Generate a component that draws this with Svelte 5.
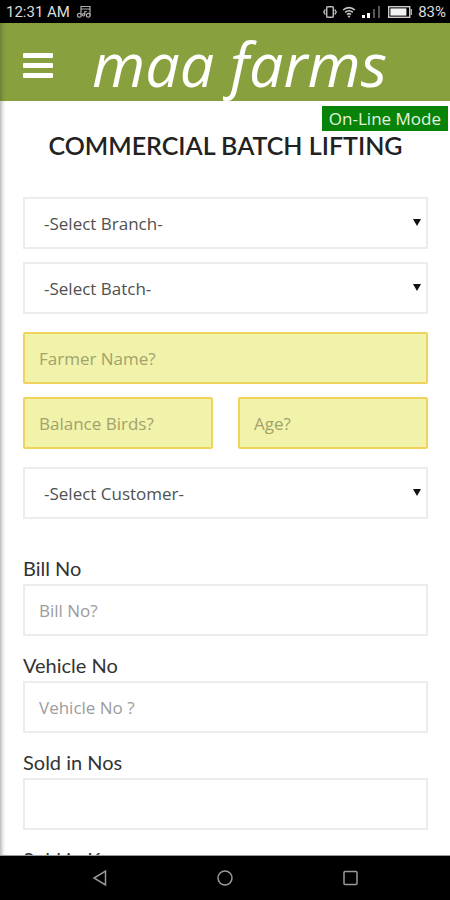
<script lang="ts">
  let branch = $state('')
  let batch = $state('')
  let customer = $state('')
</script>

<div class="screen">
  <div class="status">
    <span>12:31 AM</span>
    <svg class="note" width="16" height="15" viewBox="0 0 16 15" fill="none" stroke="#aaa" stroke-width="1.2">
      <path d="M5 11V2.5h9v9M5 5h9M8.8 10.5V7.5h2" />
      <circle cx="3.3" cy="11.3" r="1.9" />
      <circle cx="7.6" cy="10.8" r="1.2" />
      <circle cx="12.3" cy="11.3" r="1.9" />
    </svg>
    <div class="indicators">
      <svg width="14" height="14" viewBox="0 0 14 14" fill="none" stroke="#bbb" stroke-width="1.5">
        <rect x="3.7" y="1.7" width="6.6" height="10.6" rx="1" />
        <path d="M2.2 4.5 0.8 7l1.4 2.5M11.8 4.5 13.2 7l-1.4 2.5" />
      </svg>
      <svg width="14" height="14" viewBox="0 0 14 14" fill="none" stroke="#ccc" stroke-width="1.6">
        <path d="M1.2 5C4.6 1.8 9.4 1.8 12.8 5M3.2 7.3c2.2-2 5.4-2 7.6 0M5 9.5c1.2-1 2.8-1 4 0" />
        <path d="M5.4 10.8h3.2L7 13z" fill="#ccc" stroke="none" />
      </svg>
      <svg width="20" height="14" viewBox="0 0 20 14">
        <path d="M1 10h3v3H1zM6 8h3v5H6z" fill="#fff" />
        <path d="M12 4h2v9h-2zM17 1h2v12h-2z" fill="#555" />
      </svg>
      <svg class="battery" width="25" height="14" viewBox="0 0 25 14">
        <rect x="0.7" y="1.7" width="21" height="10.6" fill="none" stroke="#ccc" stroke-width="1.4" />
        <rect x="2.4" y="3.4" width="16" height="7.2" fill="#f2f2f2" />
        <path d="M22.5 4H24v6h-1.5z" fill="#aaa" />
      </svg>
      <span>83%</span>
    </div>
  </div>

  <header>
    <button class="menu" type="button" aria-label="Menu">
      <i></i><i></i><i></i>
    </button>
    <span class="brand">maa farms</span>
  </header>

  <main>
    <span class="mode">On-Line Mode</span>
    <h1>COMMERCIAL BATCH LIFTING</h1>

    <form>
      <div class="group">
        <div class="select">
          <select bind:value={branch} aria-label="Branch">
            <option value="">-Select Branch-</option>
          </select>
        </div>
        <div class="select">
          <select bind:value={batch} aria-label="Batch">
            <option value="">-Select Batch-</option>
          </select>
        </div>
      </div>

      <div class="group">
        <input class="info" type="text" placeholder="Farmer Name?" aria-label="Farmer Name" readonly />
        <div class="pair">
          <input class="info" type="text" placeholder="Balance Birds?" aria-label="Balance Birds" readonly />
          <input class="info" type="text" placeholder="Age?" aria-label="Age" readonly />
        </div>
      </div>

      <div class="select">
        <select bind:value={customer} aria-label="Customer">
          <option value="">-Select Customer-</option>
        </select>
      </div>

      <div class="fields">
        <div class="field">
          <label for="bill">Bill No</label>
          <input id="bill" type="text" placeholder="Bill No?" />
        </div>
        <div class="field">
          <label for="vehicle">Vehicle No</label>
          <input id="vehicle" type="text" placeholder="Vehicle No ?" />
        </div>
        <div class="field">
          <label for="nos">Sold in Nos</label>
          <input id="nos" type="text" />
        </div>
        <div class="field">
          <label for="kgs">Sold in Kgs</label>
          <input id="kgs" type="text" />
        </div>
      </div>
    </form>
  </main>

  <nav>
    <button type="button" aria-label="Back">
      <svg width="16" height="18" viewBox="0 0 16 18"><path d="M13.5 2v14L2 9z" /></svg>
    </button>
    <button type="button" aria-label="Home">
      <svg width="16" height="16" viewBox="0 0 16 16"><circle cx="8" cy="8" r="7" /></svg>
    </button>
    <button type="button" aria-label="Recent apps">
      <svg width="16" height="16" viewBox="0 0 16 16"><rect x="2" y="1.5" width="13" height="13" rx="1" /></svg>
    </button>
  </nav>
</div>

<style>
  :global(body) { margin: 0; background: #fff; }
  .screen {
    display: flex;
    flex-direction: column;
    height: 100vh;
    overflow: hidden;
    font-family: "Open Sans", "Noto Sans", sans-serif;
    color: #222;
  }
  .status {
    display: flex;
    align-items: center;
    flex: none;
    height: 23px;
    padding: 0 4px 0 6px;
    background: #000;
    color: #ddd;
    font: 15px Roboto, sans-serif;
  }
  .note { margin-left: 6px; }
  .indicators {
    display: flex;
    align-items: center;
    gap: 5px;
    margin-left: auto;
  }
  .battery { margin-left: 2px; }
  header {
    display: flex;
    align-items: center;
    flex: none;
    box-sizing: border-box;
    height: 78px;
    padding: 6px 23px 0;
    background: #88a03d;
    box-shadow: inset 5px 0 5px -4px #5f7030;
  }
  .menu {
    display: flex;
    flex-direction: column;
    gap: 5px;
    padding: 0;
    border: 0;
    background: none;
  }
  .menu i {
    width: 30px;
    height: 5px;
    border-radius: 1px;
    background: #fff;
  }
  .brand {
    margin-left: 39px;
    padding-bottom: 3px;
    color: #fff;
    font: italic 61px/72px "Open Sans", sans-serif;
    white-space: nowrap;
  }
  main {
    position: relative;
    flex: 1;
    min-height: 0;
    overflow: hidden;
    padding: 28px 22px 0 23px;
    border-bottom: 1px solid #999;
    box-shadow: inset 5px 0 5px -4px #999;
  }
  .mode {
    position: absolute;
    top: 5px;
    right: 2px;
    padding: 0 7px;
    background: #078307;
    color: #e4f3e0;
    font-size: 17px;
    line-height: 25px;
  }
  h1 {
    margin: 0 0 36px;
    font: 600 25px/32px Lato, sans-serif;
    text-align: center;
    white-space: nowrap;
  }
  .group {
    display: grid;
    gap: 13px;
    margin-bottom: 18px;
  }
  .pair {
    display: grid;
    grid-template-columns: 1fr 1fr;
    gap: 25px;
  }
  input, select {
    box-sizing: border-box;
    display: block;
    width: 100%;
    min-width: 0;
    height: 52px;
    margin: 0;
    padding: 0 14px;
    border: 2px solid #ececec;
    border-radius: 0;
    background: #fff;
    color: #505050;
    font: 17px "Open Sans", "Noto Sans", sans-serif;
  }
  input::placeholder { color: #9c9c9c; opacity: 1; }
  select {
    appearance: none;
    padding: 0 30px 0 19px;
  }
  .select { position: relative; }
  .select::after {
    content: "";
    position: absolute;
    top: 22px;
    right: 7px;
    border: 4px solid transparent;
    border-top: 7px solid #111;
    border-bottom: 0;
    pointer-events: none;
  }
  .info {
    border-color: #efd35c;
    border-radius: 2px;
    background: #f1f3aa;
  }
  .info::placeholder { color: #a2a26c; }
  .fields {
    display: grid;
    gap: 13px;
    margin-top: 33px;
  }
  label {
    display: block;
    font: 20px/32px Lato, sans-serif;
    color: #333;
  }
  nav {
    display: flex;
    justify-content: center;
    align-items: center;
    gap: 109px;
    flex: none;
    height: 44px;
    background: #000;
  }
  nav button {
    display: flex;
    padding: 0;
    border: 0;
    background: none;
  }
  nav svg {
    fill: none;
    stroke: #999;
    stroke-width: 1.5;
  }
</style>
